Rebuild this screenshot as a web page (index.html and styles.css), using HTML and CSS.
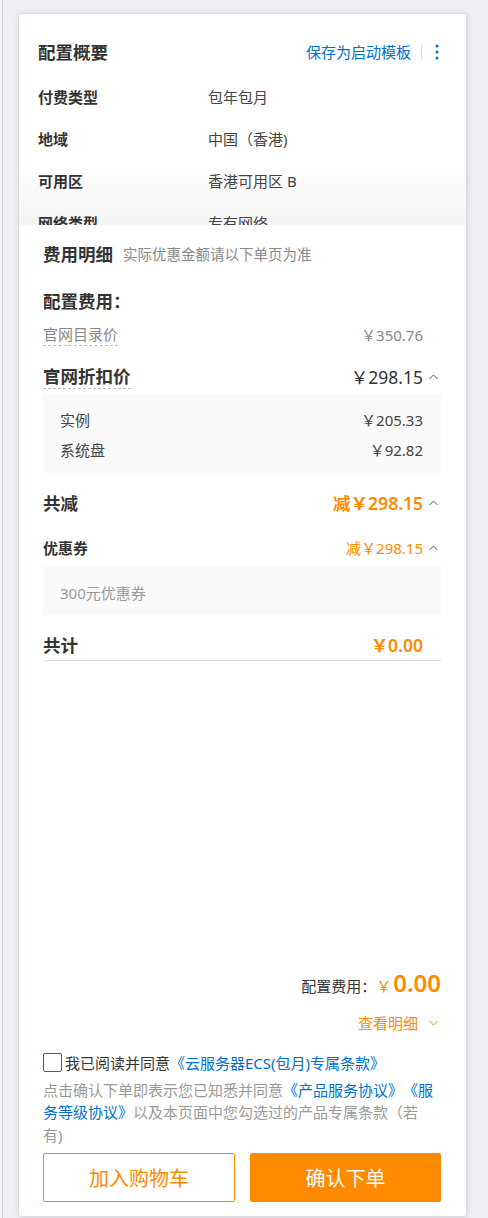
FILE: index.html
```html
<!DOCTYPE html>
<html lang="zh-CN">
<head>
<meta charset="utf-8">
<title>配置概要</title>
<link rel="stylesheet" href="styles.css">
</head>
<body>
<div class="page">
  <div class="edge"></div>
  <div class="card">
    <section class="summary">
      <div class="summary-head">
        <h2 class="title">配置概要</h2>
        <div class="actions">
          <a class="link">保存为启动模板</a>
          <span class="divider"></span>
          <svg class="kebab" width="4" height="16" viewBox="0 0 4 16"><circle cx="2" cy="2" r="1.5" fill="#0070cc"/><circle cx="2" cy="8" r="1.5" fill="#0070cc"/><circle cx="2" cy="14" r="1.5" fill="#0070cc"/></svg>
        </div>
      </div>
      <div class="kv"><span class="k">付费类型</span><span class="v">包年包月</span></div>
      <div class="kv"><span class="k">地域</span><span class="v">中国（香港)</span></div>
      <div class="kv"><span class="k">可用区</span><span class="v">香港可用区 B</span></div>
      <div class="kv"><span class="k">网络类型</span><span class="v">专有网络</span></div>
    </section>

    <section class="fees">
      <div class="fees-head"><span class="fees-title">费用明细</span><span class="fees-note">实际优惠金额请以下单页为准</span></div>
      <div class="sub-title">配置费用：</div>

      <div class="row row-list">
        <span class="dashed lbl-gray">官网目录价</span>
        <span class="amt-gray pad-r">￥350.76</span>
      </div>

      <div class="row row-big">
        <span class="dashed lbl-big">官网折扣价</span>
        <span class="amt-wrap"><span class="amt-big">￥298.15</span><svg class="chev" width="9" height="6" viewBox="0 0 9 6"><polyline points="0.5,5 4.5,1 8.5,5" fill="none" stroke="#555" stroke-width="1"/></svg></span>
      </div>
      <div class="box">
        <div class="box-row"><span>实例</span><span>￥205.33</span></div>
        <div class="box-row"><span>系统盘</span><span>￥92.82</span></div>
      </div>

      <div class="row row-big row-minus">
        <span class="lbl-big">共减</span>
        <span class="amt-wrap"><span class="amt-big orange semi">减￥298.15</span><svg class="chev" width="9" height="6" viewBox="0 0 9 6"><polyline points="0.5,5 4.5,1 8.5,5" fill="none" stroke="#555" stroke-width="1"/></svg></span>
      </div>

      <div class="row row-coupon">
        <span class="lbl-mid">优惠券</span>
        <span class="amt-wrap"><span class="amt-mid orange">减￥298.15</span><svg class="chev" width="9" height="6" viewBox="0 0 9 6"><polyline points="0.5,5 4.5,1 8.5,5" fill="none" stroke="#555" stroke-width="1"/></svg></span>
      </div>
      <div class="coupon-box">300元优惠券</div>

      <div class="row row-big row-total">
        <span class="lbl-big">共计</span>
        <span class="amt-big orange semi pad-r">￥0.00</span>
      </div>

      <div class="footer">
        <div class="grand">
          <span class="grand-label">配置费用：</span>
          <span class="grand-yen">￥</span>
          <span class="grand-num">0.00</span>
        </div>
        <div class="detail-toggle">
          <span>查看明细</span>
          <svg class="chev-down" width="9" height="6" viewBox="0 0 9 6"><polyline points="0.5,1 4.5,5 8.5,1" fill="none" stroke="#ff8a00" stroke-width="1"/></svg>
        </div>
        <label class="agree">
          <span class="checkbox"></span>
          <span>我已阅读并同意<a class="link">《云服务器ECS(包月)专属条款》</a></span>
        </label>
        <p class="terms">点击确认下单即表示您已知悉并同意<a class="link">《产品服务协议》</a><a class="link">《服务等级协议》</a>以及本页面中您勾选过的产品专属条款（若有)</p>
        <div class="buttons">
          <button class="btn btn-ghost">加入购物车</button>
          <button class="btn btn-primary">确认下单</button>
        </div>
      </div>
    </section>
  </div>
</div>
</body>
</html>
```

FILE: styles.css
```css
* { box-sizing: border-box; }
html, body { margin: 0; padding: 0; }
body {
  background: #eef0f3;
  font-family: "Noto Sans", "Noto Sans CJK SC", sans-serif;
  color: #333;
  width: 488px;
  height: 1218px;
  overflow: hidden;
  text-spacing-trim: space-all;
}
.page {
  display: flex;
  align-items: flex-start;
  height: 1218px;
}
.edge {
  width: 3px;
  height: 1218px;
  background: #f6f7f9;
  border-right: 1px solid #cfd2d6;
}
.card {
  margin-left: 15px;
  margin-top: 13px;
  width: 449px;
  height: 1204px;
  background: #fff;
  border: 1px solid #d9dadc;
  border-radius: 4px;
  box-shadow: 1px 1px 6px rgba(0,0,0,0.10);
  display: flex;
  flex-direction: column;
  overflow: hidden;
}

/* summary */
.summary {
  height: 211px;
  flex: none;
  overflow: hidden;
  padding: 0 25px 0 19px;
  background: linear-gradient(to bottom, #fff 0px, #fff 150px, #f4f4f5 211px);
}
.summary-head {
  display: flex;
  align-items: center;
  justify-content: space-between;
  padding-top: 27px;
  margin-bottom: 12px;
}
.title {
  margin: 0;
  font-size: 17.5px;
  line-height: 22px;
  font-weight: 700;
  color: #333;
}
.actions {
  display: flex;
  align-items: center;
}
.link { color: #0070cc; text-decoration: none; }
.actions .link { font-size: 15px; line-height: 22px; }
.divider {
  width: 1px;
  height: 14px;
  background: #ddd;
  margin: 0 13px 0 10px;
}
.kebab { display: block; margin-right: 2px; }
.kv {
  display: flex;
  align-items: center;
  height: 42px;
  font-size: 15px;
}
.k { width: 170px; font-weight: 700; color: #333; }
.v { color: #444; }

/* fees */
.fees {
  flex: 1;
  display: flex;
  flex-direction: column;
  padding: 18px 25px 14px 24px;
  background: #fff;
}
.fees-head {
  display: flex;
  align-items: center;
  line-height: 22px;
}
.fees-title { font-size: 17.5px; font-weight: 700; color: #333; }
.fees-note { font-size: 14.5px; color: #888; margin-left: 10px; }
.sub-title {
  margin-top: 25px;
  font-size: 17.5px;
  font-weight: 700;
  line-height: 22px;
}
.row {
  display: flex;
  align-items: center;
  justify-content: space-between;
}
.row-list { margin-top: 11px; line-height: 22px; font-size: 15px; }
.dashed { border-bottom: 1px dashed #bbb; }
.lbl-gray { color: #888; }
.amt-gray { color: #888; }
.pad-r { padding-right: 18px; }
.row-big { margin-top: 18px; line-height: 24px; }
.lbl-big { font-size: 17.5px; font-weight: 700; color: #333; }
.amt-big { font-size: 17.5px; color: #333; }
.amt-wrap { display: flex; align-items: center; }
.chev { display: block; margin-left: 6px; margin-right: 3px; }
.orange { color: #ff8a00; }
.semi { font-weight: 600; }
.box {
  margin-top: 5px;
  background: #fafafa;
  padding: 10px 18px 9px 17px;
}
.box-row {
  display: flex;
  justify-content: space-between;
  align-items: center;
  height: 30px;
  font-size: 15px;
  color: #444;
}
.row-minus { margin-top: 18px; }
.row-coupon { margin-top: 22px; line-height: 22px; }
.lbl-mid { font-size: 15px; font-weight: 700; color: #333; }
.amt-mid { font-size: 15px; }
.coupon-box {
  margin-top: 7px;
  height: 49px;
  background: #fafafa;
  display: flex;
  align-items: center;
  padding: 3px 0 0 17px;
  font-size: 15px;
  color: #999;
}
.row-total {
  margin-top: 18px;
  padding-bottom: 3px;
  border-bottom: 1px solid #ddd;
}

/* footer */
.footer {
  margin-top: auto;
  display: flex;
  flex-direction: column;
}
.grand {
  display: flex;
  align-items: baseline;
  justify-content: flex-end;
  line-height: 32px;
}
.grand-label { font-size: 15px; color: #333; }
.grand-yen { font-size: 15px; color: #ff8a00; margin-left: 0; margin-right: 2px; }
.grand-num { font-size: 24px; font-weight: 600; color: #ff8a00; }
.detail-toggle {
  margin-top: 10px;
  display: flex;
  align-items: center;
  justify-content: flex-end;
  line-height: 22px;
  font-size: 15px;
  color: #ff8a00;
}
.chev-down { display: block; margin-left: 11px; margin-right: 3px; }
.agree {
  margin-top: 18px;
  display: flex;
  align-items: center;
  line-height: 22px;
  font-size: 15px;
  color: #333;
}
.checkbox {
  width: 19px;
  height: 19px;
  border: 1px solid #4b5f80;
  border-radius: 2px;
  margin-right: 3px;
  flex: none;
}
.terms {
  margin: 5px 0 0;
  padding-right: 6px;
  font-size: 15px;
  line-height: 22.5px;
  color: #999;
}
.buttons {
  margin-top: 7px;
  display: flex;
  justify-content: space-between;
}
.btn {
  width: 192px;
  height: 49px;
  font-family: inherit;
  font-size: 20px;
  border-radius: 2px;
  cursor: pointer;
}
.btn-ghost {
  background: #fff;
  border: 1px solid #ff8a00;
  color: #ff8a00;
}
.btn-primary {
  background: #ff8a00;
  border: 1px solid #ff8a00;
  color: #fff;
  width: 191px;
}
```
